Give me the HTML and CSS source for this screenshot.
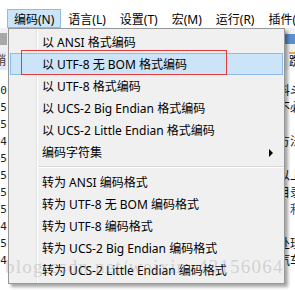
FILE: index.html
```html
<!DOCTYPE html>
<html>
<head>
<meta charset="utf-8">
<link rel="stylesheet" href="styles.css">
</head>
<body>
<div class="app">
  <div class="menubar">
    <span class="mi active">编码(N)</span>
    <span class="mi">语言(L)</span>
    <span class="mi">设置(T)</span>
    <span class="mi">宏(M)</span>
    <span class="mi">运行(R)</span>
    <span class="mi">插件(P)</span>
  </div>
  <div class="toolbar">
    <span class="tb-icon"></span>
    <span class="tb-right"></span>
  </div>
  <div class="tabs">
    <span class="tab-left">鞘</span>
    <span class="tab-right">踟</span>
  </div>
  <div class="editor">
    <div class="gutter">
      <div>10</div><div>15</div><div>25</div><div>34</div><div>45</div><div>55</div><div>65</div><div>75</div><div>84</div><div>95</div><div>104</div>
    </div>
    <div class="text">
      <div class="ln">资料斗</div>
      <div class="ln">不必</div>
      <div class="ln">&nbsp;</div>
      <div class="ln">方法</div>
      <div class="ln">&nbsp;</div>
      <div class="ln">以上</div>
      <div class="ln">目录</div>
      <div class="ln blue">利</div>
      <div class="ln">·</div>
      <div class="ln">处理</div>
      <div class="ln">汽车</div>
    </div>
  </div>

  <div class="dropdown">
    <div class="item">以 ANSI 格式编码</div>
    <div class="item hover">以 UTF-8 无 BOM 格式编码</div>
    <div class="item">以 UTF-8 格式编码</div>
    <div class="item">以 UCS-2 Big Endian 格式编码</div>
    <div class="item">以 UCS-2 Little Endian 格式编码</div>
    <div class="item sub">编码字符集<span class="arrow"></span></div>
    <div class="sep"></div>
    <div class="item">转为 ANSI 编码格式</div>
    <div class="item">转为 UTF-8 无 BOM 编码格式</div>
    <div class="item">转为 UTF-8 编码格式</div>
    <div class="item">转为 UCS-2 Big Endian 编码格式</div>
    <div class="item">转为 UCS-2 Little Endian 编码格式</div>
  </div>
  <div class="redbox"></div>
  <div class="watermark">blog.csdn.net/weixin_43156064</div>
</div>
</body>
</html>
```
FILE: styles.css
```css
html, body {
  margin: 0;
  padding: 0;
  background: #ffffff;
  overflow: hidden;
}
.app {
  position: relative;
  width: 295px;
  height: 290px;
  overflow: hidden;
  font-family: "Noto Sans", "Noto Sans CJK SC", sans-serif;
  font-size: 12px;
  color: #000;
}
.menubar {
  display: flex;
  padding: 9px 0 0 7px;
  height: 19px;
  background: #ffffff;
  white-space: nowrap;
}
.mi {
  display: flex;
  align-items: center;
  height: 19px;
  padding: 0 6px;
  border: 1px solid transparent;
  box-sizing: border-box;
}
.mi.active {
  background: #cce4f7;
  border-color: #8cbcea;
}
.toolbar {
  height: 22px;
  background: #f0f0f0;
  display: flex;
  justify-content: space-between;
  align-items: center;
}
.tb-icon {
  width: 7px;
  height: 12px;
  background: #a8a8a8;
}
.tb-right {
  width: 12px;
  height: 10px;
  background: #5b8fd0;
}
.tabs {
  height: 20px;
  display: flex;
  justify-content: space-between;
  background: #f0f0f0;
  border-top: 2px solid #f0f0f0;
  box-sizing: border-box;
  line-height: 18px;
}
.tab-left {
  margin-left: -6px;
  color: #444;
  background: #dde8f4;
}
.tab-right {
  margin-right: -6px;
  background: #fff;
  border-top: 2px solid #f4a23c;
  line-height: 16px;
}
.editor {
  display: flex;
  justify-content: space-between;
  padding-top: 12px;
}
.gutter {
  width: 7px;
  overflow: hidden;
  direction: rtl;
  font-family: "DejaVu Sans Mono", monospace;
  font-size: 11px;
  line-height: 17px;
  color: #222;
}
.gutter div {
  text-align: right;
}
.text {
  margin-right: -7px;
  font-size: 12px;
  line-height: 17px;
  color: #111;
  text-align: right;
}
.ln.blue {
  color: #2a4aa8;
}
.dropdown {
  position: absolute;
  left: 8px;
  top: 28px;
  width: 277px;
  height: 256px;
  box-sizing: border-box;
  background: #f0f0f0;
  border: 1px solid #979797;
  padding: 2px 0;
  box-shadow: 3px 3px 3px rgba(0, 0, 0, 0.35);
  background-image: linear-gradient(to right, transparent 27px, #e2e3e3 27px, #e2e3e3 28px, #ffffff 28px, #ffffff 29px, transparent 29px);
}
.item {
  position: relative;
  height: 22px;
  line-height: 22px;
  margin: 0 1px;
  padding-left: 31px;
  border: 1px solid transparent;
  box-sizing: border-box;
  white-space: nowrap;
}
.item.hover {
  background: #cce4f7;
  border-color: #8cbcea;
}
.arrow {
  position: absolute;
  right: 9px;
  top: 7px;
  width: 0;
  height: 0;
  border-top: 4px solid transparent;
  border-bottom: 4px solid transparent;
  border-left: 4px solid #000;
}
.sep {
  height: 8px;
  margin-left: 29px;
  background: linear-gradient(to bottom, transparent 3px, #d7d7d7 3px, #d7d7d7 4px, #ffffff 4px, #ffffff 5px, transparent 5px);
}
.redbox {
  position: absolute;
  left: 21px;
  top: 50px;
  width: 206px;
  height: 25px;
  box-sizing: border-box;
  border: 1px solid #e53b3b;
}
.watermark {
  position: absolute;
  left: 5px;
  top: 256px;
  font-family: "Liberation Serif", serif;
  font-size: 19px;
  letter-spacing: 1.2px;
  color: rgba(150, 150, 150, 0.35);
  white-space: nowrap;
  pointer-events: none;
}
```
